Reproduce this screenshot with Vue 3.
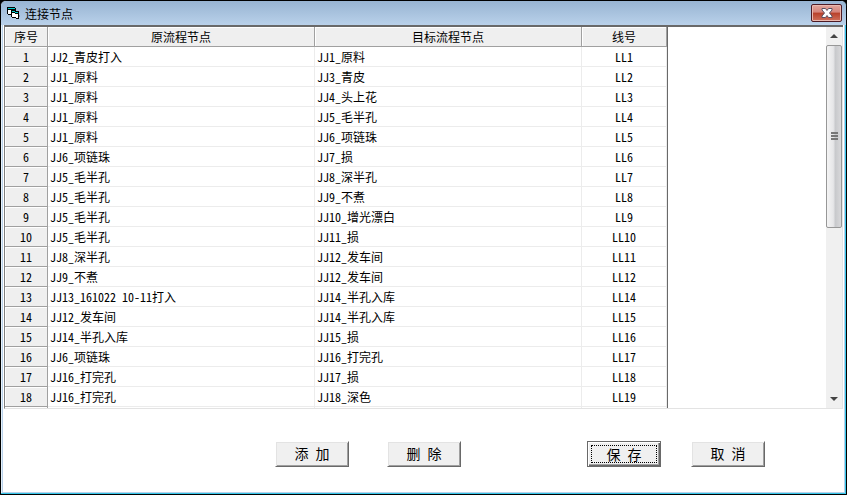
<template>
  <div class="window">
    <header class="titlebar">
      <svg class="app-icon" width="16" height="16" viewBox="0 0 16 16" shape-rendering="crispEdges">
        <path d="M2 2h8v1h1v8H8v-1H3V9H2z" fill="#000" />
        <path d="M3 3h7v1H3z" fill="#0cc" />
        <path d="M3 5h6v4H3z" fill="#fff" />
        <path d="M6 5h4v1h4v8h-3v-1H7v-1H6z" fill="#000" />
        <path d="M7 6h3v1h3v1h-3V7H7z" fill="#0cc" />
        <path d="M7 8h3v1h3v4h-2v-1H7z" fill="#fff" />
        <path d="M14 10h1v2h-1z" fill="#7b8ea3" />
      </svg>
      <h1>连接节点</h1>
      <button type="button" class="close" aria-label="关闭">
        <svg width="12" height="10" viewBox="0 0 12 10">
          <path d="M1 .5h3.500L6 2.500 7.500 .5H11V2L8.500 5 11 8v1.500H7.500L6 7.500 4.500 9.500H1V8L3.500 5 1 2z" fill="#fff" stroke="#5a5061" />
        </svg>
      </button>
    </header>

    <main class="grid">
      <div class="sheet">
        <table>
          <colgroup>
            <col class="c-no" />
            <col class="c-node" />
            <col class="c-node" />
            <col class="c-line" />
          </colgroup>
          <thead>
            <tr>
              <th>序号</th>
              <th>原流程节点</th>
              <th>目标流程节点</th>
              <th>线号</th>
            </tr>
          </thead>
          <tbody>
            <tr v-for="(row, i) in rows" :key="i">
              <th scope="row">{{ i + 1 }}</th>
              <td>{{ row[0] }}</td>
              <td>{{ row[1] }}</td>
              <td class="center">{{ row[2] }}</td>
            </tr>
            <tr>
              <th></th>
              <td></td>
              <td></td>
              <td></td>
            </tr>
          </tbody>
        </table>
      </div>
      <div class="scrollbar">
        <button type="button" aria-label="向上">
          <svg width="8" height="4" viewBox="0 0 8 4"><path d="M4 0L8 4H0z" fill="#444" /></svg>
        </button>
        <div class="track">
          <div class="thumb"><i></i><i></i><i></i></div>
        </div>
        <button type="button" aria-label="向下">
          <svg width="8" height="4" viewBox="0 0 8 4"><path d="M0 0h8L4 4z" fill="#444" /></svg>
        </button>
      </div>
    </main>

    <footer class="actions">
      <div class="group edit">
        <button type="button">添 加</button>
        <button type="button">删 除</button>
      </div>
      <div class="group">
        <button type="button" class="default"><span>保 存</span></button>
        <button type="button">取 消</button>
      </div>
    </footer>
  </div>
</template>

<script setup>
import { ref } from 'vue'

// 原节点、目标节点、线号
const rows = ref([
  ['JJ2_青皮打入', 'JJ1_原料', 'LL1'],
  ['JJ1_原料', 'JJ3_青皮', 'LL2'],
  ['JJ1_原料', 'JJ4_头上花', 'LL3'],
  ['JJ1_原料', 'JJ5_毛半孔', 'LL4'],
  ['JJ1_原料', 'JJ6_项链珠', 'LL5'],
  ['JJ6_项链珠', 'JJ7_损', 'LL6'],
  ['JJ5_毛半孔', 'JJ8_深半孔', 'LL7'],
  ['JJ5_毛半孔', 'JJ9_不煮', 'LL8'],
  ['JJ5_毛半孔', 'JJ10_增光漂白', 'LL9'],
  ['JJ5_毛半孔', 'JJ11_损', 'LL10'],
  ['JJ8_深半孔', 'JJ12_发车间', 'LL11'],
  ['JJ9_不煮', 'JJ12_发车间', 'LL12'],
  ['JJ13_161022 10-11打入', 'JJ14_半孔入库', 'LL14'],
  ['JJ12_发车间', 'JJ14_半孔入库', 'LL15'],
  ['JJ14_半孔入库', 'JJ15_损', 'LL16'],
  ['JJ6_项链珠', 'JJ16_打完孔', 'LL17'],
  ['JJ16_打完孔', 'JJ17_损', 'LL18'],
  ['JJ16_打完孔', 'JJ18_深色', 'LL19']
])
</script>

<style>
body {
  margin: 0;
  background: #000;
}
</style>

<style scoped>
.window {
  display: flex;
  flex-direction: column;
  box-sizing: border-box;
  height: 100vh;
  border: 1px solid #000;
  border-radius: 6px 6px 0 0;
  background: #fff;
  box-shadow: inset -1px -1px #35c5e8, inset 1px 0 #e4f1fb, inset -2px -2px #b9d1ea, inset 2px 0 #b9d1ea;
  color: #000;
  font-family: "Noto Sans CJK SC", sans-serif;
  font-size: 12px;
  /* 西文用半角字形 */
  font-feature-settings: "hwid";
  overflow: hidden;
}

.titlebar {
  display: flex;
  align-items: center;
  box-sizing: border-box;
  height: 24px;
  padding: 0 4px;
  background: linear-gradient(#98b4d2, #b9d1ea);
}

h1 {
  flex: 1;
  margin: 0 0 0 4px;
  font-size: 12px;
  font-weight: 400;
}

.close {
  display: flex;
  align-items: center;
  justify-content: center;
  width: 31px;
  height: 18px;
  padding: 0;
  border: 1px solid #4d1a24;
  border-radius: 2px;
  background: linear-gradient(#e3a69c, #d5837a 45%, #b8402a 50%, #d0705c);
  box-shadow: inset 0 0 0 1px #eab9b0;
}

.grid {
  display: flex;
  flex: 1;
  min-height: 0;
  margin: 0 3px;
  border-top: 2px solid #696969;
  border-bottom: 1px solid #e3e3e3;
  border-left: 1px solid #808080;
}

.sheet {
  flex: 1;
  overflow: hidden;
}

table {
  width: 663px;
  border-right: 1px solid #696969;
  border-spacing: 0;
  table-layout: fixed;
}

.c-no {
  width: 43px;
}

.c-node {
  width: 267px;
}

th,
td {
  box-sizing: border-box;
  height: 20px;
  padding: 0 2px;
  border-right: 1px solid #ececec;
  border-bottom: 1px solid #ececec;
  font-weight: 400;
  line-height: 19px;
  white-space: nowrap;
}

th {
  border-color: #a0a0a0;
  background: #efefef;
  box-shadow: inset 1px 1px #fff;
}

.center {
  text-align: center;
}

.scrollbar {
  display: flex;
  flex-direction: column;
  width: 16px;
  border-right: 1px solid #e3e3e3;
  background: #f0f0f0;
}

.scrollbar button {
  display: flex;
  align-items: center;
  justify-content: center;
  height: 18px;
  padding: 0;
  border: 0;
  background: transparent;
}

.track {
  flex: 1;
}

.thumb {
  display: flex;
  flex-direction: column;
  align-items: center;
  justify-content: center;
  gap: 1px;
  box-sizing: border-box;
  height: 53%;
  border: 1px solid #979797;
  border-radius: 2px;
  background: linear-gradient(90deg, #f4f4f4, #e6e6e8 45%, #c8c9cc 60%, #d8d8da);
}

.thumb i {
  width: 7px;
  height: 2px;
  background: #777;
}

.actions {
  display: flex;
  justify-content: flex-end;
  gap: 126px;
  padding: 32px 81px 27px;
}

.group {
  display: flex;
  gap: 30px;
}

.edit {
  gap: 38px;
}

.actions button {
  width: 74px;
  height: 26px;
  padding: 0 0 2px;
  border: 1px solid;
  border-color: #fff #696969 #696969 #fff;
  background: #f0f0f0;
  box-shadow: inset 1px 1px #e3e3e3, inset -1px -1px #a0a0a0;
  color: #000;
  font: 14px/20px "Noto Sans CJK SC", sans-serif;
  font-feature-settings: "hwid";
}

.actions .default {
  padding: 2px 3px 3px;
  border-color: #696969;
  box-shadow: inset 1px 1px #fff, inset -1px -1px #696969, inset -2px -2px #a0a0a0;
}

.default span {
  display: block;
  border: 1px dotted #000;
  line-height: 16px;
}
</style>
